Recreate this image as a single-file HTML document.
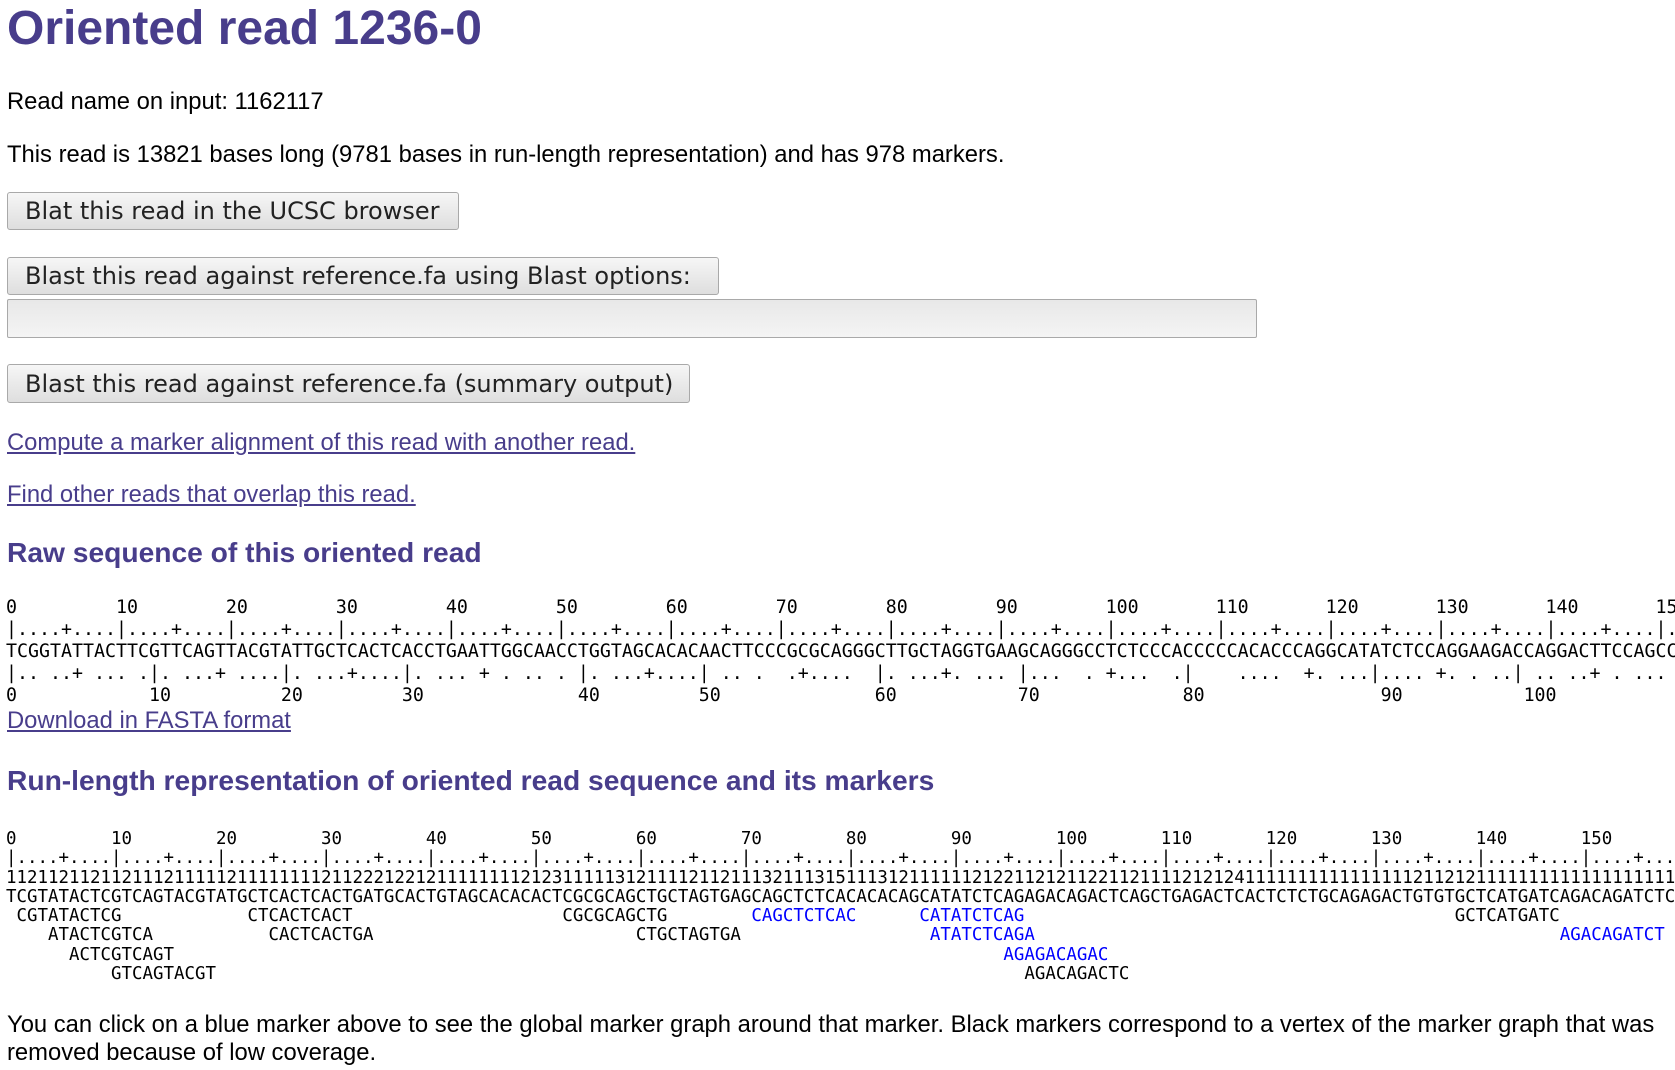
<!DOCTYPE html>
<html><head><meta charset="utf-8">
<style>
html,body{margin:0;padding:0;background:#fff;width:1675px;height:1070px;overflow:hidden;position:relative;}
.a{position:absolute;left:7px;white-space:nowrap;}
.t{font-family:"Liberation Sans",Arial,sans-serif;font-size:23.8px;color:#000;line-height:28px;}
h1,h2{margin:0;font-family:"Liberation Sans",Arial,sans-serif;color:#483D8B;font-weight:bold;}
h1{font-size:48px;line-height:56px;}
h2{font-size:28.2px;line-height:34px;}
a{color:#483D8B;text-decoration:underline;}
.btn{position:absolute;left:7px;box-sizing:border-box;border:1px solid #a9a9a9;border-radius:3px;
 background:linear-gradient(#f6f6f6,#dedede);font-family:"DejaVu Sans",sans-serif;font-size:24px;color:#222;
 padding-left:17px;white-space:nowrap;display:flex;align-items:center;}
.inp{position:absolute;left:7px;box-sizing:border-box;border:1px solid #a9a9a9;border-radius:2px;background:linear-gradient(#e8e8e8,#f4f4f4);}
pre{margin:0;position:absolute;left:6px;font-family:"DejaVu Sans Mono",monospace;white-space:pre;color:#000;}
.raw{font-size:18.27px;line-height:22px;}
.rle{font-size:17.44px;line-height:19.3px;}
.b{color:#0000ff;}
</style></head><body>
<h1 class="a" style="top:1px;">Oriented read 1236-0</h1>
<div class="a t" style="top:88px;">Read name on input: 1162117</div>
<div class="a t" style="top:141px;">This read is 13821 bases long (9781 bases in run-length representation) and has 978 markers.</div>
<div class="btn" style="top:192px;width:452px;height:38px;">Blat this read in the UCSC browser</div>
<div class="btn" style="top:257px;width:712px;height:38px;">Blast this read against reference.fa using Blast options:</div>
<div class="inp" style="top:299px;width:1250px;height:39px;"></div>
<div class="btn" style="top:364px;width:683px;height:39px;">Blast this read against reference.fa (summary output)</div>
<div class="a t" style="top:429px;"><a>Compute a marker alignment of this read with another read.</a></div>
<div class="a t" style="top:481px;"><a>Find other reads that overlap this read.</a></div>
<h2 class="a" style="top:535px;">Raw sequence of this oriented read</h2>
<pre class="raw" style="top:597px;">0         10        20        30        40        50        60        70        80        90        100       110       120       130       140       150
|....+....|....+....|....+....|....+....|....+....|....+....|....+....|....+....|....+....|....+....|....+....|....+....|....+....|....+....|....+....|....+....|
TCGGTATTACTTCGTTCAGTTACGTATTGCTCACTCACCTGAATTGGCAACCTGGTAGCACACAACTTCCCGCGCAGGGCTTGCTAGGTGAAGCAGGGCCTCTCCCACCCCCACACCCAGGCATATCTCCAGGAAGACCAGGACTTCCAGCCTGA
|.. ..+ ... .|. ...+ ....|. ...+....|. ... + . .. . |. ...+....| .. .  .+....  |. ...+. ... |...  . +...  .|    ....  +. ...|.... +. . ..| .. ..+ . ...
0            10          20         30              40         50              60           70             80                90           100</pre>
<div class="a t" style="top:707px;"><a>Download in FASTA format</a></div>
<h2 class="a" style="top:763px;">Run-length representation of oriented read sequence and its markers</h2>
<pre class="rle" style="top:830px;">0         10        20        30        40        50        60        70        80        90        100       110       120       130       140       150       160
|....+....|....+....|....+....|....+....|....+....|....+....|....+....|....+....|....+....|....+....|....+....|....+....|....+....|....+....|....+....|....+....|
1121121121121112111112111111112112221221211111111212311111312111121121113211131511131211111121221121211221121111212124111111111111111121121211111111111111111111
TCGTATACTCGTCAGTACGTATGCTCACTCACTGATGCACTGTAGCACACACTCGCGCAGCTGCTAGTGAGCAGCTCTCACACACAGCATATCTCAGAGACAGACTCAGCTGAGACTCACTCTCTGCAGAGACTGTGTGCTCATGATCAGACAGATCTCAGT
 CGTATACTCG            CTCACTCACT                    CGCGCAGCTG        <span class="b">CAGCTCTCAC</span>      <span class="b">CATATCTCAG</span>                                         GCTCATGATC
    ATACTCGTCA           CACTCACTGA                         CTGCTAGTGA                  <span class="b">ATATCTCAGA</span>                                                  <span class="b">AGACAGATCT</span>
      ACTCGTCAGT                                                                               <span class="b">AGAGACAGAC</span>
          GTCAGTACGT                                                                             AGACAGACTC</pre>
<div class="a t" style="top:1011px;">You can click on a blue marker above to see the global marker graph around that marker. Black markers correspond to a vertex of the marker graph that was</div>
<div class="a t" style="top:1039px;">removed because of low coverage.</div>
</body></html>
